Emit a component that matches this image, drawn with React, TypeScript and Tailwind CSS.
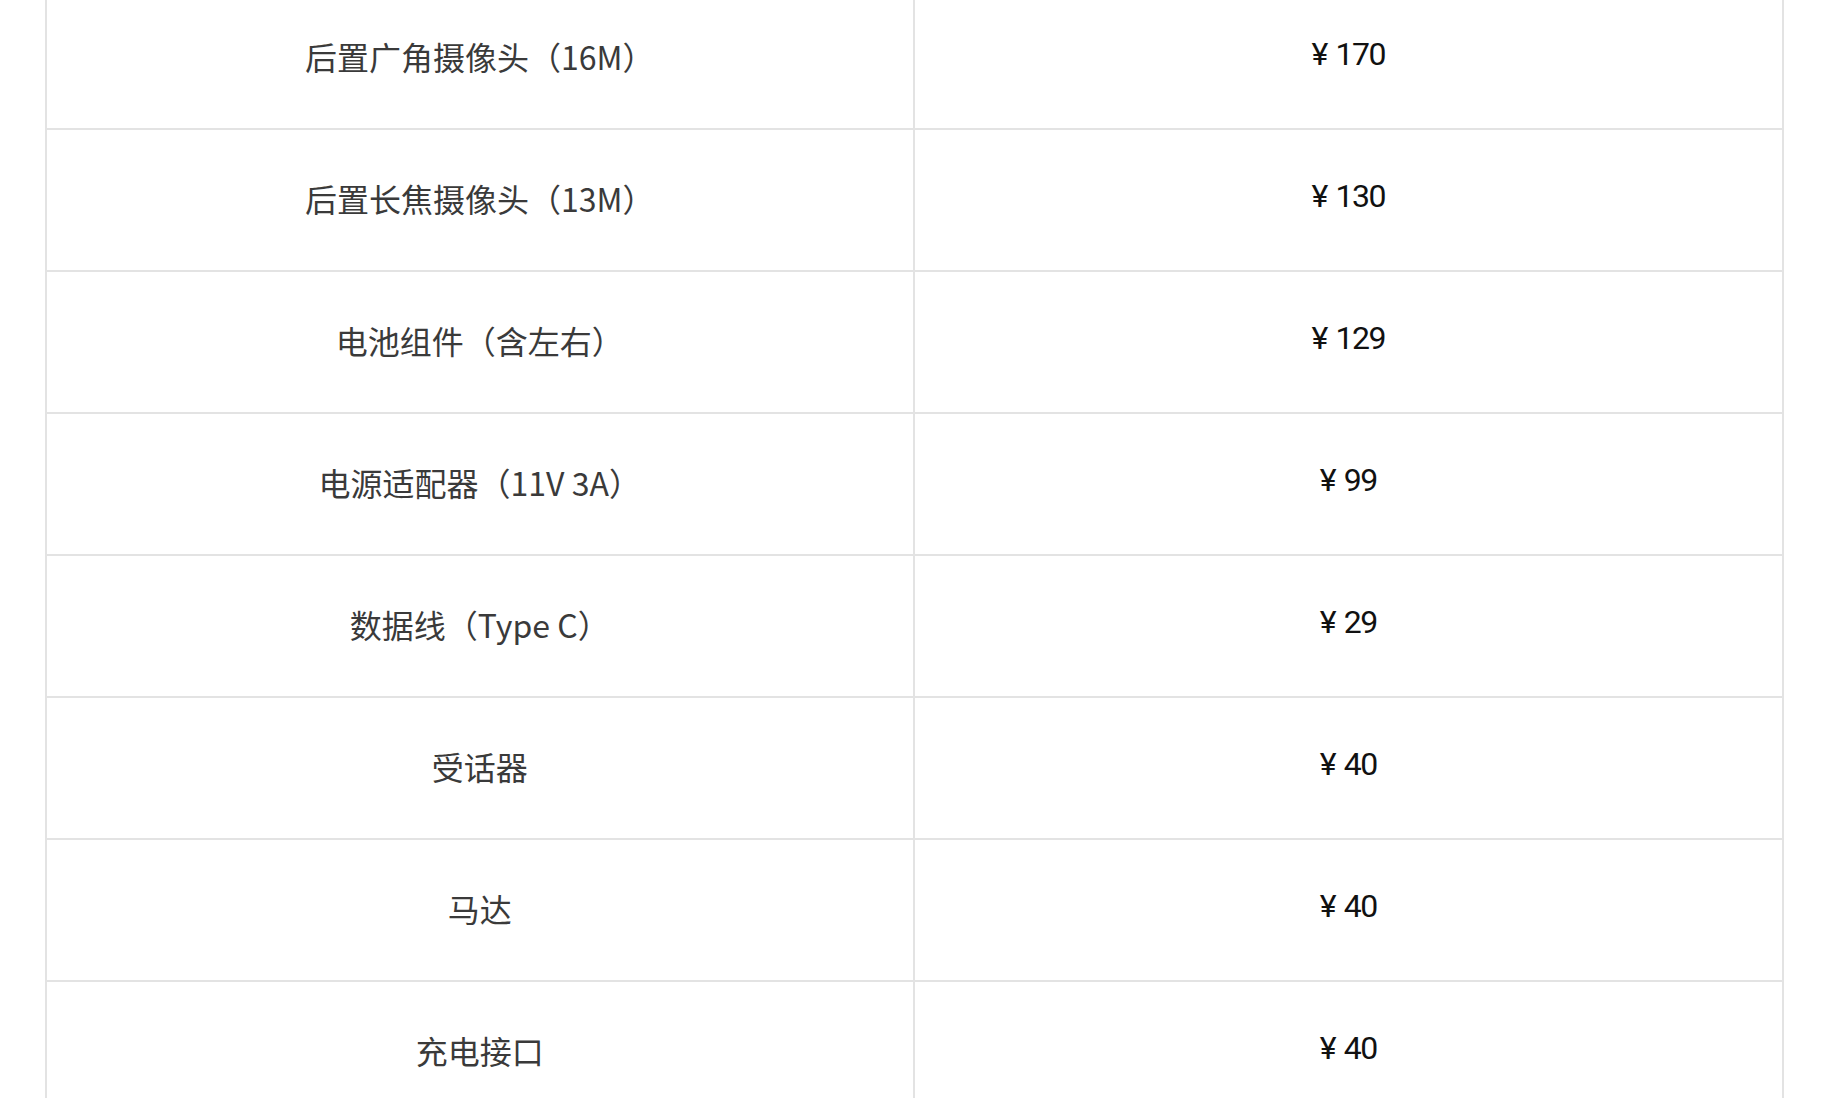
const rows: Array<{ name: string; price: string }> = [
  { name: "后置广角摄像头（16M）", price: "170" },
  { name: "后置长焦摄像头（13M）", price: "130" },
  { name: "电池组件（含左右）", price: "129" },
  { name: "电源适配器（11V 3A）", price: "99" },
  { name: "数据线（Type C）", price: "29" },
  { name: "受话器", price: "40" },
  { name: "马达", price: "40" },
  { name: "充电接口", price: "40" },
];

const App = () => {
  return (
    <div className="bg-white w-full h-[1098px] overflow-hidden">
      <div className="ml-[45px] mt-[-12px] w-[1739px] border-x-2 border-[#e3e3e3]">
        {rows.map((item, index) => (
          <div
            key={index}
            className="grid grid-cols-2 h-[142px] border-b-2 border-[#e3e3e3]"
          >
            <div className="flex items-center justify-center border-r-2 border-[#e3e3e3] pb-[4px]">
              <span className="text-[32px] text-[#3a3a3a] font-['Noto_Sans_CJK_SC',sans-serif]">
                {item.name}
              </span>
            </div>
            <div className="flex items-center justify-center pb-[8px]">
              <span className="text-[32px] text-[#111111] font-['Roboto','Noto_Sans_CJK_SC',sans-serif]">
                <span className="mr-[7px]">¥</span>
                <span className="tracking-[-1.5px]">{item.price}</span>
              </span>
            </div>
          </div>
        ))}
      </div>
    </div>
  );
};

export default App;
